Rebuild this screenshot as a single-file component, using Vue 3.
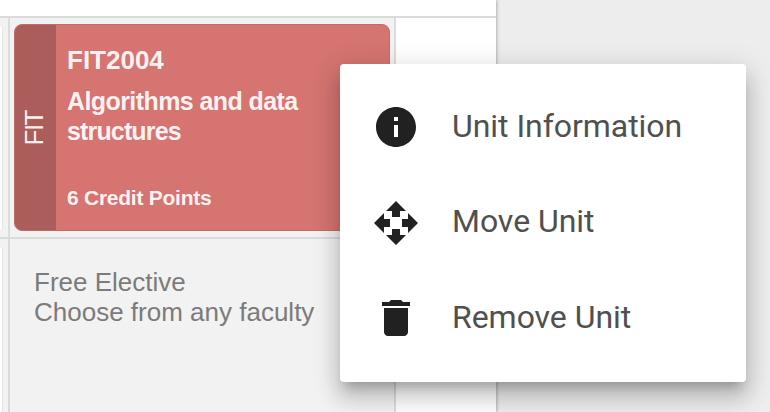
<script setup>
const items = [
  { label: 'Unit Information', path: 'M12 2C6.48 2 2 6.48 2 12s4.48 10 10 10 10-4.48 10-10S17.52 2 12 2zm1 15h-2v-6h2v6zm0-8h-2V7h2v2z' },
  { label: 'Move Unit', path: 'M10 9h4V6h3l-5-5-5 5h3v3zm-1 1H6V7l-5 5 5 5v-3h3v-4zm14 2l-5-5v3h-3v4h3v3l5-5zm-9 3h-4v3H7l5 5 5-5h-3v-3z' },
  { label: 'Remove Unit', path: 'M6 19c0 1.1.9 2 2 2h8c1.1 0 2-.9 2-2V7H6v12zM19 4h-3.500l-1-1h-5l-1 1H5v2h14V4z' },
]
</script>

<template>
  <main class="screen">
    <section class="planner">
      <div class="top"></div>
      <div class="row">
        <div class="previous"><div class="stub"></div></div>
        <div class="cell">
          <article class="unit">
            <aside class="faculty"><span>FIT</span></aside>
            <div class="details">
              <h2>FIT2004</h2>
              <p class="name"><span class="l1">Algorithms and data</span><br /><span class="l2">structures</span></p>
              <p class="credit">6 Credit Points</p>
            </div>
          </article>
        </div>
        <div class="empty"></div>
      </div>
      <div class="row">
        <div class="previous"><div class="stub"></div></div>
        <div class="cell">
          <p class="elective">Free Elective<br />Choose from any faculty</p>
        </div>
        <div class="empty"></div>
      </div>
    </section>
    <nav class="menu">
      <a v-for="item in items" :key="item.label" class="item">
        <svg viewBox="0 0 24 24"><path :d="item.path" /></svg>
        <span>{{ item.label }}</span>
      </a>
    </nav>
  </main>
</template>

<style>
body { overflow: hidden; }
</style>

<style scoped>
* { box-sizing: border-box; }
h2, p { margin: 0; }
.screen {
  position: relative;
  width: 770px;
  height: 412px;
  overflow: hidden;
  background: #ededed;
  font-family: "Liberation Sans", Arial, sans-serif;
}
.planner {
  width: 496px;
  height: 412px;
  background: #fff;
  box-shadow: 1px 0 3px rgba(0, 0, 0, 0.25);
}
.top { height: 15.500px; }
.row {
  display: grid;
  grid-template-columns: 8px 388px 100px;
  height: 221.500px;
  border-top: 2px solid #dadcdb;
}
.previous, .cell { background: #f2f2f2; }
.cell {
  padding: 6px 4px;
  border: 0 solid #d8dcda;
  border-width: 0 2px;
}
.stub {
  width: 3px;
  height: 204px;
  margin-top: 8px;
  background: #fff;
  border-right: 1px solid #e5e5e5;
  border-radius: 0 5px 5px 0;
}
.unit {
  display: flex;
  width: 376px;
  height: 207px;
  overflow: hidden;
  border: 1px solid #c26b67;
  border-radius: 8px;
  background: #d57471;
  color: rgba(255, 255, 255, 0.93);
}
.faculty {
  display: flex;
  align-items: center;
  justify-content: center;
  width: 41px;
  padding: 2px 4px 0 0;
  background: #aa5d5b;
}
.faculty span {
  writing-mode: vertical-rl;
  transform: rotate(180deg);
  font-size: 26px;
  line-height: 30px;
  letter-spacing: -1.500px;
}
.details { padding: 20px 0 0 11px; white-space: nowrap; }
h2 { font-size: 26px; line-height: 30px; }
.name { margin-top: 11px; font-size: 25px; font-weight: 700; line-height: 30px; }
.l1 { letter-spacing: -0.580px; }
.l2 { letter-spacing: -0.850px; }
.credit { margin-top: 40px; font-size: 21px; font-weight: 700; line-height: 24px; letter-spacing: -0.250px; }
.elective {
  padding: 22px 0 0 20px;
  color: #7b7b7b;
  font-size: 26px;
  line-height: 30px;
  white-space: nowrap;
}
.menu {
  position: absolute;
  left: 340px;
  top: 64px;
  width: 406px;
  height: 318px;
  padding: 15.500px 0;
  background: #fff;
  border-radius: 4px;
  box-shadow: 0 10px 10px -6px rgba(0, 0, 0, 0.2), 0 16px 20px 2px rgba(0, 0, 0, 0.14), 0 6px 28px 4px rgba(0, 0, 0, 0.12);
}
.item {
  display: flex;
  align-items: center;
  gap: 32px;
  height: 95.500px;
  padding-left: 32px;
  font-family: Roboto, sans-serif;
  font-size: 32px;
  line-height: 40px;
  white-space: nowrap;
}
.item svg { width: 48px; height: 48px; fill: #212121; }
.item span { padding-bottom: 3px; color: #505050; letter-spacing: -0.040px; }
</style>
